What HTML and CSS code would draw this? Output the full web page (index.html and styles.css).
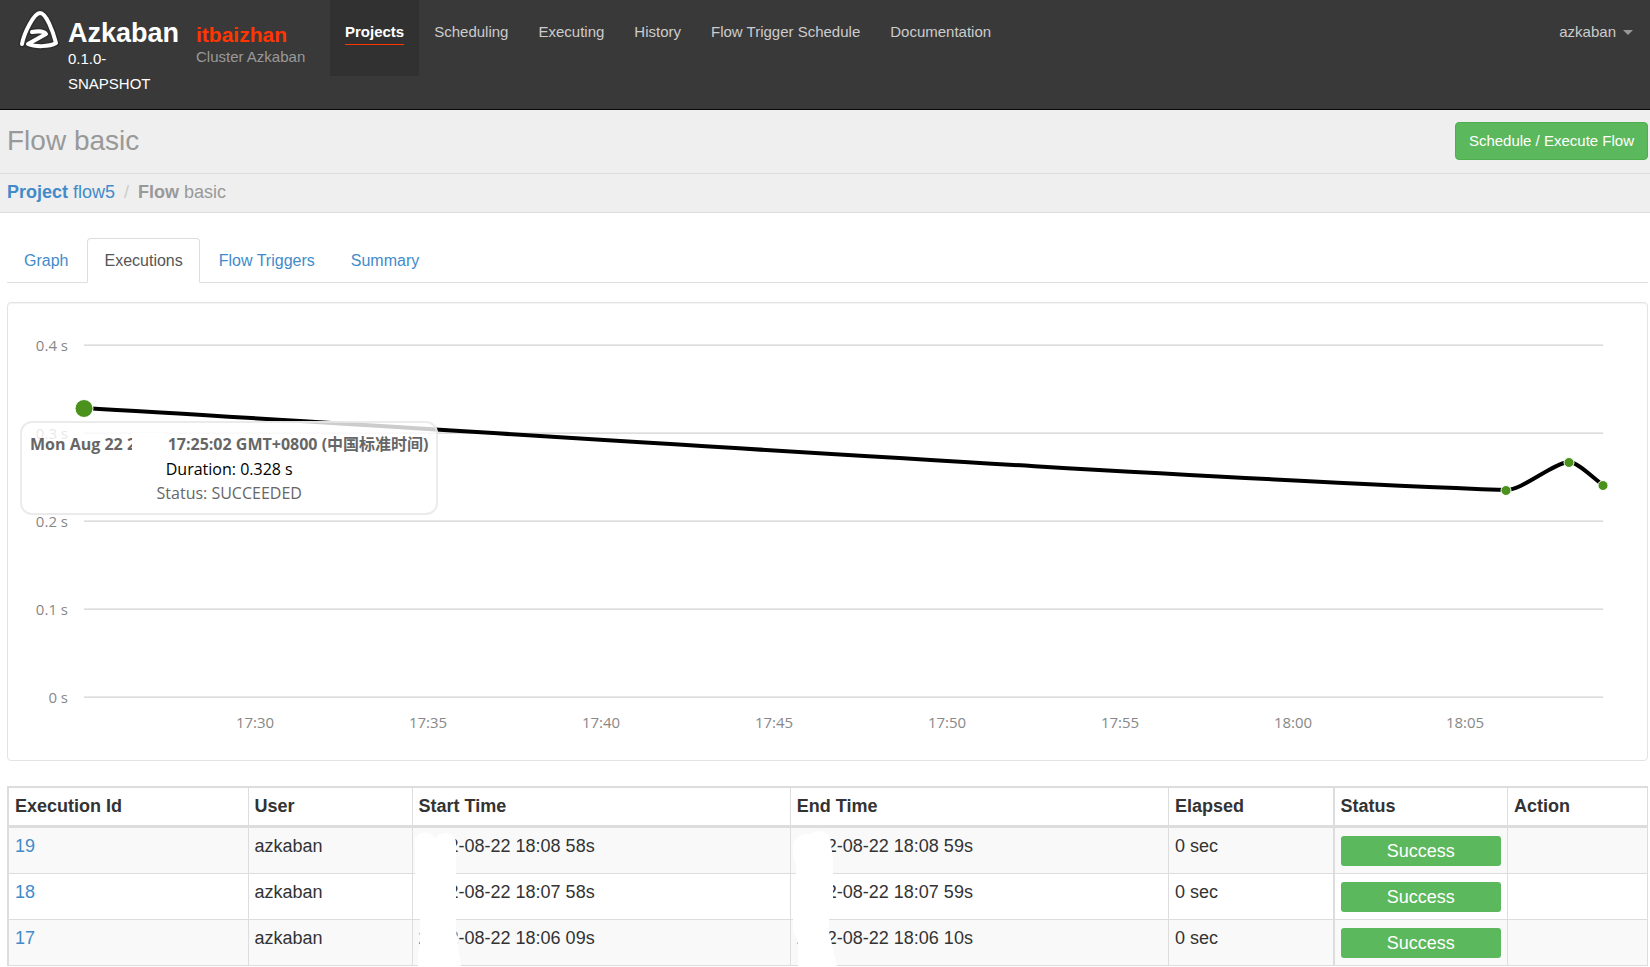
FILE: index.html
```
<!DOCTYPE html>
<html lang="en">
<head>
    <meta charset="UTF-8">
    <meta name="viewport" content="width=device-width, initial-scale=1.0">
    <title>Azkaban Web Client</title>
    <link rel="stylesheet" href="styles.css">
</head>
<body>
    <header class="navbar">
        <div class="brand">
            <svg class="logo" width="40" height="40" viewBox="0 0 40 40" aria-hidden="true">
                <path class="logo-shadow" d="M3 35C5 24 15 4 21 4S34 22 37 34C30 38 16 38 9 35L27 25C25 22 18 22 13 23" />
                <path class="logo-line" d="M3 35C5 24 15 4 21 4S34 22 37 34C30 38 16 38 9 35L27 25C25 22 18 22 13 23" />
            </svg>
            <a class="brand-text" href="#">
                <strong>Azkaban</strong>
                <span>0.1.0-SNAPSHOT</span>
            </a>
        </div>
        <div class="cluster">
            <div class="cluster-name">itbaizhan</div>
            <div class="cluster-label">Cluster Azkaban</div>
        </div>
        <nav class="menu">
            <a class="active" href="#"><span>Projects</span></a>
            <a href="#"><span>Scheduling</span></a>
            <a href="#"><span>Executing</span></a>
            <a href="#"><span>History</span></a>
            <a href="#"><span>Flow Trigger Schedule</span></a>
            <a href="#"><span>Documentation</span></a>
        </nav>
        <button class="user" type="button">azkaban <span class="caret"></span></button>
    </header>

    <div class="page-header">
        <h1>Flow basic</h1>
        <button class="btn-success" type="button">Schedule / Execute Flow</button>
    </div>

    <div class="breadcrumb">
        <a href="#"><strong>Project</strong> flow5</a>
        <span class="slash">/</span>
        <span class="current"><strong>Flow</strong> basic</span>
    </div>

    <main class="content">
        <ul class="tabs">
            <li><a href="#">Graph</a></li>
            <li><a class="active" href="#">Executions</a></li>
            <li><a href="#">Flow Triggers</a></li>
            <li><a href="#">Summary</a></li>
        </ul>

        <div class="panel">
            <svg class="chart" viewBox="0 0 1639 457" role="img" aria-label="Execution time">
                <g class="grid">
                    <path d="M76 42H1595" />
                    <path d="M76 130H1595" />
                    <path d="M76 218H1595" />
                    <path d="M76 306H1595" />
                    <path d="M76 394H1595" />
                </g>
                <g class="y-labels">
                    <text x="60" y="48">0.4 s</text>
                    <text x="60" y="136">0.3 s</text>
                    <text x="60" y="224">0.2 s</text>
                    <text x="60" y="312">0.1 s</text>
                    <text x="60" y="400">0 s</text>
                </g>
                <g class="x-labels">
                    <text x="247" y="425">17:30</text>
                    <text x="420" y="425">17:35</text>
                    <text x="593" y="425">17:40</text>
                    <text x="766" y="425">17:45</text>
                    <text x="939" y="425">17:50</text>
                    <text x="1112" y="425">17:55</text>
                    <text x="1285" y="425">18:00</text>
                    <text x="1457" y="425">18:05</text>
                </g>
                <path class="series" d="M76 105C431.5 125.5 1142.5 174 1498 187C1513.7 187.6 1545.2 159.8 1561 159C1569.5 158.6 1586.5 176.3 1595 182" />
                <g class="points">
                    <circle cx="76" cy="105.5" r="9" />
                    <circle cx="1498" cy="187.5" r="5" />
                    <circle cx="1561" cy="159.5" r="5" />
                    <circle cx="1595" cy="182.5" r="5" />
                </g>
            </svg>
            <div class="tooltip">
                <div class="tooltip-date">Mon Aug 22 <span class="year">2022</span> 17:25:02 GMT+0800 (中国标准时间)</div>
                <div class="tooltip-value">Duration: 0.328 s</div>
                <div class="tooltip-status">Status: SUCCEEDED</div>
            </div>
        </div>

        <table class="executions">
            <thead>
                <tr>
                    <th class="col-id">Execution Id</th>
                    <th class="col-user">User</th>
                    <th>Start Time</th>
                    <th>End Time</th>
                    <th class="col-elapsed">Elapsed</th>
                    <th class="col-status">Status</th>
                    <th class="col-action">Action</th>
                </tr>
            </thead>
            <tbody>
                <tr>
                    <td><a href="#">19</a></td>
                    <td>azkaban</td>
                    <td class="masked">2022-08-22 18:08 58s
                        <svg class="mask" width="50" height="136" viewBox="0 0 50 136" aria-hidden="true">
                            <path d="M1 11A11 11 0 0 1 22 8Q26 2 33 2Q43 3 43 13V98L48 136H5V124L7 112V88H2V20Z" />
                        </svg>
                    </td>
                    <td class="masked">2022-08-22 18:08 59s
                        <svg class="mask" width="50" height="136" viewBox="0 0 50 136" aria-hidden="true">
                            <path d="M2 16Q4 2 19 3Q24 0 31 0Q39 2 40 12L42 30V87H38V100L46 136H7V110L2 100V87H5V34Q2 26 2 16Z" />
                        </svg>
                    </td>
                    <td>0 sec</td>
                    <td class="status"><div class="label">Success</div></td>
                    <td></td>
                </tr>
                <tr>
                    <td><a href="#">18</a></td>
                    <td>azkaban</td>
                    <td>2022-08-22 18:07 58s</td>
                    <td>2022-08-22 18:07 59s</td>
                    <td>0 sec</td>
                    <td class="status"><div class="label">Success</div></td>
                    <td></td>
                </tr>
                <tr>
                    <td><a href="#">17</a></td>
                    <td>azkaban</td>
                    <td>2022-08-22 18:06 09s</td>
                    <td>2022-08-22 18:06 10s</td>
                    <td>0 sec</td>
                    <td class="status"><div class="label">Success</div></td>
                    <td></td>
                </tr>
            </tbody>
        </table>
    </main>
</body>
</html>
```

FILE: styles.css
```
* {
    box-sizing: border-box;
}

body {
    margin: 0;
    font-family: "Liberation Sans", Arial, sans-serif;
    font-size: 18px;
    line-height: 24px;
    color: #333;
    background-color: #fff;
}

a {
    color: #428bca;
    text-decoration: none;
}

button {
    font-family: inherit;
    cursor: pointer;
}

/* top bar */
.navbar {
    display: flex;
    align-items: flex-start;
    background-color: #393939;
    border-bottom: 1px solid #080808;
    font-size: 15px;
}

.brand {
    display: flex;
    width: 196px;
    padding: 0 15px 13px 19px;
}

.logo {
    flex: none;
    margin: 9px 9px 0 0;
    overflow: visible;
}

.logo path {
    fill: none;
    stroke-linecap: round;
    stroke-linejoin: round;
}

.logo-shadow {
    stroke: #2e2e2e;
    stroke-width: 7;
}

.logo-line {
    stroke: #fff;
    stroke-width: 4;
}

.brand-text {
    padding-top: 21px;
    color: #fff;
    line-height: 25px;
}

.brand-text strong {
    display: block;
    font-size: 27px;
}

.brand-text span {
    display: block;
}

.cluster {
    width: 134px;
    padding-top: 23px;
}

.cluster-name {
    font-size: 21px;
    font-weight: bold;
    color: #ff3601;
}

.cluster-label {
    line-height: 20px;
    color: #999;
}

.menu {
    display: flex;
    flex: 1;
}

.menu a {
    padding: 20px 15px 31px;
    color: #ccc;
}

.menu span {
    display: block;
    border-bottom: 1px solid transparent;
}

.menu .active {
    background-color: #313131;
    color: #fff;
    font-weight: bold;
}

.menu .active span {
    border-bottom-color: #ff3601;
}

.user {
    display: flex;
    align-items: center;
    gap: 7px;
    padding: 20px 17px;
    border: none;
    background: none;
    color: #ccc;
    font-size: 15px;
    line-height: 24px;
}

.caret {
    border-top: 5px solid #999;
    border-left: 5px solid transparent;
    border-right: 5px solid transparent;
}

/* page title */
.page-header {
    display: flex;
    justify-content: space-between;
    align-items: center;
    padding: 12px 2px 13px 7px;
    background-color: #efefef;
    border-bottom: 1px solid #ddd;
}

.page-header h1 {
    margin: 0;
    font-size: 28px;
    font-weight: normal;
    line-height: 36px;
    color: #999;
}

.btn-success {
    padding: 6px 13px;
    border: 1px solid #4cae4c;
    border-radius: 4px;
    background-color: #5cb85c;
    color: #fff;
    font-size: 15px;
    line-height: 24px;
}

.breadcrumb {
    display: flex;
    gap: 9px;
    padding: 6px 7px 8px;
    background-color: #efefef;
    border-bottom: 1px solid #ddd;
    color: #999;
}

.slash {
    color: #ccc;
}

.content {
    padding: 25px 2px 0 7px;
}

/* tabs */
.tabs {
    display: flex;
    gap: 2px;
    margin: 0;
    padding: 0;
    list-style: none;
    border-bottom: 1px solid #ddd;
    font-size: 16px;
}

.tabs li {
    margin-bottom: -1px;
}

.tabs a {
    display: block;
    padding: 10px 16px 9px;
    border: 1px solid transparent;
    border-radius: 4px 4px 0 0;
}

.tabs .active {
    color: #555;
    background-color: #fff;
    border-color: #ddd #ddd #fff;
}

/* execution time chart */
.panel {
    position: relative;
    margin: 19px 0 25px;
    border: 1px solid #e3e3e3;
    border-radius: 4px;
    box-shadow: inset 0 1px 1px rgba(0, 0, 0, 0.05);
}

.chart {
    display: block;
    width: 100%;
    font-family: "Open Sans", "Noto Sans", sans-serif;
    font-size: 15px;
    fill: #888;
}

.grid path {
    stroke: #d2d2d2;
    stroke-width: 1.25;
}

.y-labels {
    text-anchor: end;
}

.x-labels {
    text-anchor: middle;
}

.series {
    fill: none;
    stroke: #000;
    stroke-width: 4;
}

.points circle {
    fill: #4b921d;
    stroke: #fff;
    stroke-width: 1;
}

.tooltip {
    position: absolute;
    left: 12px;
    top: 118px;
    padding: 9px 8px;
    border: 2px solid rgba(230, 230, 230, 0.8);
    border-radius: 12px;
    background-color: rgba(255, 255, 255, 0.8);
    font-family: "Open Sans", "Noto Sans", "Noto Sans CJK SC", sans-serif;
    font-size: 16px;
    text-align: center;
    white-space: nowrap;
    color: #666;
}

.tooltip-date {
    font-weight: bold;
    line-height: 24px;
}

.tooltip-value {
    line-height: 26px;
    color: #000;
}

.tooltip-status {
    line-height: 22px;
}

.year {
    position: relative;
}

.year::after {
    content: "";
    position: absolute;
    left: 5px;
    right: -3px;
    top: 0;
    bottom: 0;
    background-color: #fff;
}

/* executions table */
.executions {
    width: 100%;
    table-layout: fixed;
    border-collapse: collapse;
    border: 1px solid #ddd;
    border-width: 2px 1px 1px 2px;
}

.executions th,
.executions td {
    padding: 6px 6px 7px;
    border: 1px solid #ddd;
    text-align: left;
    vertical-align: top;
}

.executions th {
    border-top-width: 2px;
    border-bottom-width: 3px;
}

.executions tbody tr:nth-child(odd) {
    background-color: #f9f9f9;
}

.executions th:nth-child(6),
.executions td:nth-child(6) {
    border-left-width: 2px;
}

.col-id {
    width: 240px;
}

.col-user {
    width: 164px;
}

.col-elapsed {
    width: 165px;
}

.col-status {
    width: 174px;
}

.col-action {
    width: 140px;
}

.label {
    margin-top: 2px;
    border-radius: 3px;
    background-color: #5cb85c;
    color: #fff;
    line-height: 30px;
    text-align: center;
}

.masked {
    position: relative;
}

.mask {
    position: absolute;
    left: 0;
    top: 3px;
    fill: #fff;
}
```
